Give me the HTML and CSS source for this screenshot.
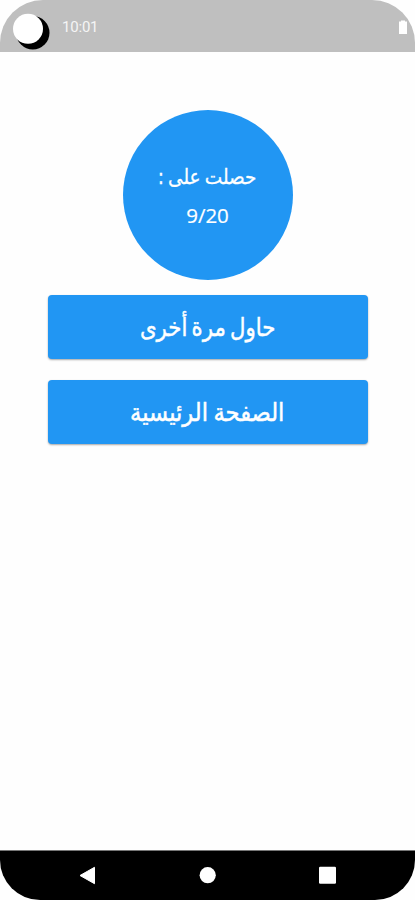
FILE: index.html
```html
<!DOCTYPE html>
<html lang="ar">
<head>
<meta charset="utf-8">
<title>النتيجة</title>
<link rel="stylesheet" href="styles.css">
</head>
<body>
<div class="screen">
  <header class="status">
    <svg class="camera" width="41" height="39" viewBox="0 0 41 39"><circle cx="22.8" cy="20.8" r="16.7" fill="#000"/><circle cx="18" cy="16.8" r="15" fill="#fff"/></svg>
    <span class="clock">10:01</span>
    <svg class="battery" width="8" height="15" viewBox="0 0 8 15"><path d="M0 1.5h2V.5h4v1h2V14H0z" fill="#fff"/></svg>
  </header>
  <main class="content" dir="rtl">
    <section class="score">
      <span class="label">حصلت على :</span>
      <span class="value" dir="ltr">9/20</span>
    </section>
    <button class="action"><span class="retry">حاول مرة أخرى</span></button>
    <button class="action"><span class="home">الصفحة الرئيسية</span></button>
  </main>
  <nav class="navbar">
    <svg width="18" height="20" viewBox="0 0 18 20"><path d="M1 9.5 15.5 1.3v16.4z" fill="#fff" stroke="#fff" stroke-linejoin="round"/></svg>
    <svg width="18" height="20" viewBox="0 0 18 20"><circle cx="8.7" cy="9.2" r="8.1" fill="#fff"/></svg>
    <svg width="18" height="20" viewBox="0 0 18 20"><rect x="0" y=".8" width="17" height="17" rx="1.2" fill="#fff"/></svg>
  </nav>
</div>
</body>
</html>
```
FILE: styles.css
```css
* { box-sizing: border-box; }
body { margin: 0; background: #fff; font-family: Roboto, "DejaVu Sans", sans-serif; }
.screen { width: 415px; height: 900px; display: flex; flex-direction: column; background: #fefefe; }
.status { height: 52px; flex: none; display: flex; background: #bfbfbf; border-radius: 43px 43px 0 0; padding: 12px 8px 0 10px; }
.camera { flex: none; }
.clock { color: #f5f5f5; font-size: 15px; line-height: 30px; margin-left: 11px; letter-spacing: -.2px; }
.battery { margin: 8px 0 0 auto; }
.content { flex: 1; display: flex; flex-direction: column; align-items: center; padding-top: 58px; }
.score { width: 170px; height: 170px; border-radius: 50%; background: #2196f3; color: #fff; display: flex; flex-direction: column; align-items: center; padding-top: 48px; margin-bottom: 15px; }
.score span { line-height: 38px; height: 38px; white-space: nowrap; }
.label { font-family: "DejaVu Sans", sans-serif; font-size: 21px; word-spacing: -2px; transform: scaleX(.88); -webkit-text-stroke: .3px #fff; }
.value { font-family: "Open Sans", sans-serif; font-size: 20.5px; -webkit-text-stroke: .2px #fff; }
.action { width: 320px; height: 64px; margin: 0 0 21px; padding: 0; border: 0; border-radius: 4px; background: #2196f3; color: #fff; font-family: "DejaVu Sans", sans-serif; font-size: 25px; box-shadow: 0 1px 2px rgba(0, 0, 0, .35); }
.action span { display: inline-block; white-space: nowrap; -webkit-text-stroke: .5px #fff; }
.retry { word-spacing: -3px; transform: scaleX(.85); }
.home { word-spacing: -2px; transform: scaleX(.905); }
.navbar { height: 50px; flex: none; display: flex; justify-content: center; align-items: center; gap: 102px; background: #000; border-top: 1px solid #777; border-radius: 0 0 40px 40px; }
```
